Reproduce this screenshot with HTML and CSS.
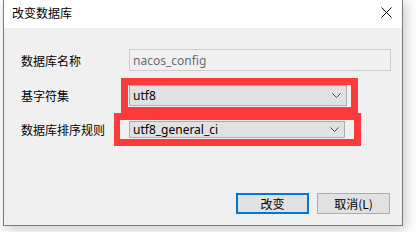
FILE: index.html
```html
<!DOCTYPE html>
<html lang="zh">
<head>
<meta charset="utf-8">
<title>改变数据库</title>
<link rel="stylesheet" href="styles.css">
</head>
<body>
<div class="window">
  <div class="titlebar">
    <span class="title">改变数据库</span>
    <span class="close">
      <svg width="11" height="11" viewBox="0 0 11 11"><path d="M0.5 0.5 L10.5 10.5 M10.5 0.5 L0.5 10.5" stroke="#000" stroke-width="1" fill="none"/></svg>
    </span>
  </div>
  <div class="content">
    <div class="row row-name">
      <label class="label">数据库名称</label>
      <div class="textbox disabled">nacos_config</div>
    </div>
    <div class="row row-charset">
      <label class="label">基字符集</label>
      <div class="combo combo-a"><span class="val">utf8</span><svg class="chev" width="9" height="5" viewBox="0 0 9 5"><path d="M0.5 0.5 L4.5 4.5 L8.5 0.5" stroke="#444" stroke-width="1" fill="none"/></svg></div>
    </div>
    <div class="row row-collation">
      <label class="label">数据库排序规则</label>
      <div class="combo combo-b"><span class="val">utf8_general_ci</span><svg class="chev" width="9" height="5" viewBox="0 0 9 5"><path d="M0.5 0.5 L4.5 4.5 L8.5 0.5" stroke="#444" stroke-width="1" fill="none"/></svg></div>
    </div>
    <div class="buttons">
      <button class="btn primary">改变</button>
      <button class="btn">取消(L)</button>
    </div>
  </div>
  <div class="mark mark-1"></div>
  <div class="mark mark-2"></div>
</div>
</body>
</html>
```

FILE: styles.css
```css
html, body {
  margin: 0;
  padding: 0;
  background: #ffffff;
  overflow: hidden;
}
body {
  width: 419px;
  height: 232px;
  font-family: "Noto Sans", "Noto Sans CJK SC", sans-serif;
  font-size: 12px;
  color: #000;
}
.window {
  position: relative;
  margin-left: 3px;
  margin-top: -1px;
  width: 400px;
  box-sizing: border-box;
  border: 1px solid #7a7a7a;
  background: #f0f0f0;
  box-shadow: 3px 3px 12px rgba(0, 0, 0, 0.22);
}
.titlebar {
  height: 28px;
  background: #ffffff;
  display: flex;
  align-items: center;
  justify-content: space-between;
}
.title {
  padding-left: 8px;
  font-family: "Noto Sans CJK SC", sans-serif;
  font-size: 12px;
  line-height: 12px;
  margin-top: -2px;
}
.close {
  width: 11px;
  height: 11px;
  margin-right: 10px;
  margin-top: -4px;
  display: flex;
}
.content {
  height: 197px;
  box-sizing: border-box;
  padding-left: 17px;
  display: flex;
  flex-direction: column;
}
.row {
  display: flex;
  align-items: center;
}
.label {
  width: 108px;
  font-family: "Noto Sans CJK SC", sans-serif;
  font-size: 12px;
}
.row-name { margin-top: 21px; height: 22px; }
.row-charset { margin-top: 14px; height: 21px; }
.row-collation { margin-top: 15px; height: 17px; }
.textbox {
  width: 262px;
  height: 22px;
  box-sizing: border-box;
  border: 1px solid #cccccc;
  padding-left: 3px;
  display: flex;
  align-items: center;
}
.textbox.disabled {
  background: #f0f0f0;
  color: #6d6d6d;
}
.combo {
  box-sizing: border-box;
  border: 1px solid #adadad;
  background: #e1e1e1;
  display: flex;
  align-items: center;
  justify-content: space-between;
  padding-left: 3px;
  padding-right: 5px;
}
.combo-a { width: 218px; height: 21px; }
.combo-b { width: 216px; height: 17px; }
.chev { display: block; }
.buttons {
  margin-top: 55px;
  display: flex;
  gap: 8px;
  padding-left: 215px;
}
.btn {
  width: 73px;
  height: 21px;
  box-sizing: border-box;
  border: 1px solid #adadad;
  background: #e1e1e1;
  font-family: "Noto Sans CJK SC", sans-serif;
  font-size: 12px;
  color: #000;
  padding: 0;
  margin: 0;
}
.btn.primary {
  border: 2px solid #0078d7;
}
.mark {
  position: absolute;
  box-sizing: border-box;
  border: 7px solid #fd3a3b;
}
.mark-1 {
  left: 117px;
  top: 78px;
  width: 237px;
  height: 36px;
}
.mark-2 {
  left: 110px;
  top: 113px;
  width: 247px;
  height: 33px;
  border-left-width: 6px;
}
```
